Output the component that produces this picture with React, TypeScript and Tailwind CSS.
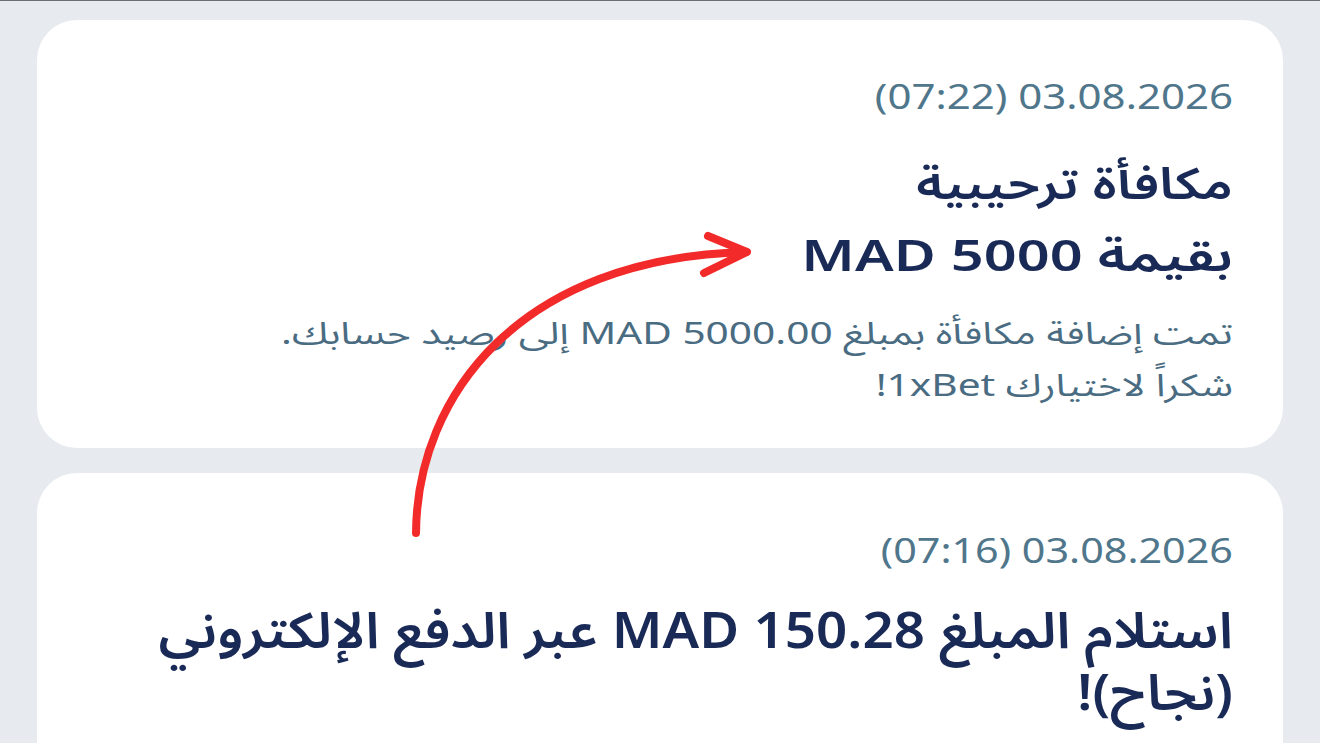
import React from "react";

const font = {
  fontFamily: '"Noto Sans", "Noto Sans Arabic", "DejaVu Sans", sans-serif',
};

export default function App() {
  return (
    <div
      className="relative w-[1320px] h-[743px] overflow-hidden bg-[#e7eaef]"
      style={font}
    >
      <div className="h-px bg-[#6b6e73]" />
      <div className="flex flex-col gap-[25px] px-[37px] pt-[19px]">
        <div className="bg-white rounded-[40px] pt-[56px] pb-[38px] pl-[50px] pr-[50px] flex flex-col">
          <div dir="ltr" className="text-right text-[35px] leading-[40px] text-[#50768b] whitespace-nowrap origin-right scale-x-[1.2]">
            (07:22) 03.08.2026
          </div>
          <div dir="rtl" className="mt-[30px] text-[44px] leading-[72px] font-semibold text-[#1a2a57] whitespace-nowrap">
            <div className="origin-right scale-x-[1.22]">مكافأة ترحيبية</div>
            <div className="origin-right scale-x-[1.31]">بقيمة 5000 MAD</div>
          </div>
          <div dir="rtl" className="mt-[16px] text-[31px] leading-[52px] text-[#4a6c82] whitespace-nowrap">
            <div className="origin-right scale-x-[1.31]">تمت إضافة مكافأة بمبلغ 5000.00 MAD إلى رصيد حسابك.</div>
            <div className="origin-right scale-x-[1.31]">شكراً لاختيارك 1xBet!</div>
          </div>
        </div>
        <div className="bg-white rounded-[40px] pt-[57px] pb-[38px] pl-[50px] pr-[50px] flex flex-col h-[400px]">
          <div dir="ltr" className="text-right text-[35px] leading-[40px] text-[#50768b] whitespace-nowrap origin-right scale-x-[1.18]">
            (07:16) 03.08.2026
          </div>
          <div dir="rtl" className="mt-[28px] text-[50px] leading-[62px] font-semibold text-[#1a2a57] whitespace-nowrap">
            <div className="origin-right scale-x-[1.093]">استلام المبلغ 150.28 MAD عبر الدفع الإلكتروني</div>
            <div className="origin-right scale-x-[1.093]">(نجاح)!</div>
          </div>
        </div>
      </div>
      <svg
        className="absolute left-0 top-0 pointer-events-none"
        width="1320"
        height="743"
        viewBox="0 0 1320 743"
      >
        <g fill="none" stroke="#f22a2a" strokeWidth="8" strokeLinecap="round" strokeLinejoin="round">
          <path d="M416 533 C 417 395, 520 258, 746 252" />
          <path d="M708 236 L 747 252 L 704 273" />
        </g>
      </svg>
    </div>
  );
}
